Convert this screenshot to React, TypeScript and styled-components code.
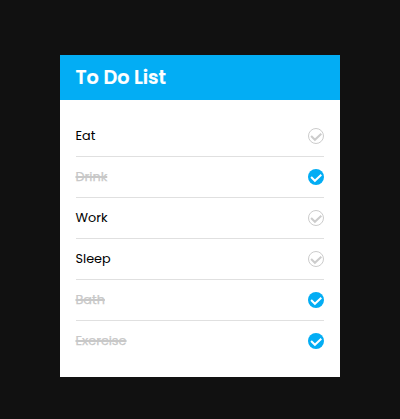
import React from 'react';
import styled, { createGlobalStyle } from 'styled-components';

const GlobalStyle = createGlobalStyle`
  * { box-sizing: border-box; }
  body {
    margin: 0;
    background: #111;
    font-family: Poppins, Inter, sans-serif;
  }
`;

const Page = styled.main`
  min-height: 100vh;
  display: flex;
  justify-content: center;
  align-items: flex-start;
  padding-top: 55px;
`;

const Card = styled.section`
  width: 280px;
  background: #fff;
`;

const Title = styled.h1`
  margin: 0;
  height: 45px;
  padding: 0 15.5px;
  background: #03adf4;
  color: #fff;
  font-size: 19.2px;
  font-weight: 600;
  line-height: 45px;
  -webkit-text-stroke: 0.2px #fff;
`;

const List = styled.ul`
  margin: 0;
  padding: 16px;
  list-style: none;
`;

const Item = styled.li`
  display: flex;
  align-items: center;
  justify-content: space-between;
  height: 41px;
  border-bottom: 1px solid #e0e0e0;

  &:last-child {
    height: 40px;
    border-bottom: 0;
  }
`;

const Label = styled.span<{ $done: boolean }>`
  margin-left: -0.5px;
  font-size: 12.8px;
  line-height: 20px;
  color: ${({ $done }) => ($done ? '#c8c8c8' : '#000')};
  text-decoration: ${({ $done }) => ($done ? 'line-through' : 'none')};
  text-decoration-thickness: 1.5px;
  -webkit-text-stroke: ${({ $done }) => ($done ? '0.25px #c8c8c8' : '0')};
`;

const CheckIcon = styled.svg<{ $done: boolean }>`
  display: block;
  width: 16px;
  height: 16px;
  fill: ${({ $done }) => ($done ? '#03adf4' : 'none')};
  stroke: ${({ $done }) => ($done ? 'none' : '#ccc')};
`;

const Tick = styled.path<{ $done: boolean }>`
  fill: none;
  stroke: ${({ $done }) => ($done ? '#fff' : '#ccc')};
  stroke-width: 2;
`;

const tasks = [
  { name: 'Eat', done: false },
  { name: 'Drink', done: true },
  { name: 'Work', done: false },
  { name: 'Sleep', done: false },
  { name: 'Bath', done: true },
  { name: 'Exercise', done: true },
];

export default function App() {
  return (
    <>
      <GlobalStyle />
      <Page>
        <Card>
          <Title>To Do List</Title>
          <List>
            {tasks.map(({ name, done }) => (
              <Item key={name}>
                <Label $done={done}>{name}</Label>
                <CheckIcon $done={done} viewBox="0 0 16 16">
                  <circle cx="8" cy="8" r={done ? 8 : 7.5} />
                  <Tick $done={done} d="M3.1 8 L6.9 11.8 L13.3 5.7" />
                </CheckIcon>
              </Item>
            ))}
          </List>
        </Card>
      </Page>
    </>
  );
}
